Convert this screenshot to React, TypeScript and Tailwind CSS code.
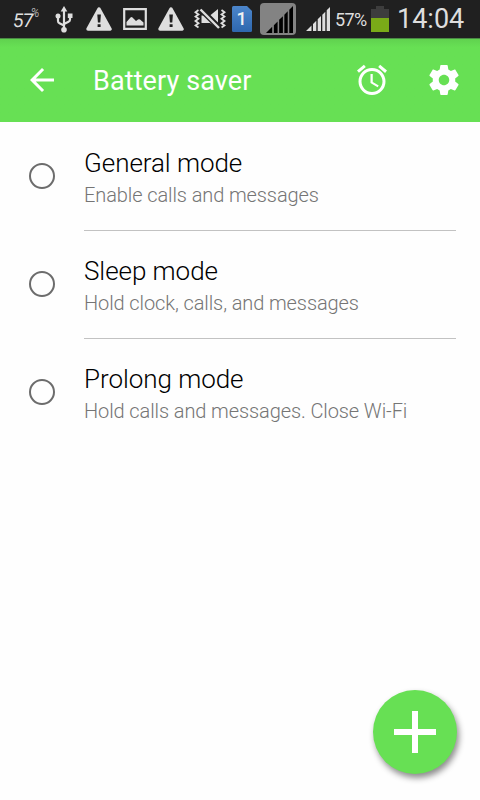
import { useState } from 'react';
import { MdAlarm, MdArrowBack } from 'react-icons/md';

interface Mode {
  id: string;
  title: string;
  description: string;
}

const modes: Mode[] = [
  { id: 'general', title: 'General mode', description: 'Enable calls and messages' },
  { id: 'sleep', title: 'Sleep mode', description: 'Hold clock, calls, and messages' },
  { id: 'prolong', title: 'Prolong mode', description: 'Hold calls and messages. Close Wi-Fi' },
];

function WarningIcon() {
  return (
    <svg className="w-[26px] h-[24px] shrink-0" viewBox="0 0 26 24" fill="#dedede">
      <path d="M13 2 24 22H2Z" stroke="#dedede" strokeWidth="3.500" strokeLinejoin="round" />
      <path d="M11.300 7.500h3.600l-.6 8h-2.400zM11.600 17.200h3v2.800h-3z" fill="#202020" />
    </svg>
  );
}

function UsbIcon() {
  return (
    <svg className="w-[18px] h-[27px] shrink-0" viewBox="0 0 18 27" fill="none" stroke="#dedede" strokeWidth="2.200">
      <path d="M9 4v19M3 11v4q0 1.500 1.500 2.200L9 19.500M15 9.500v4q0 1.500-1.500 2.200L9 18" />
      <path d="M9 0 12.300 5.500H5.700Z" fill="#dedede" stroke="none" />
      <circle cx="9" cy="23.700" r="2.800" fill="#dedede" stroke="none" />
      <circle cx="3" cy="10" r="2.500" fill="#dedede" stroke="none" />
      <path d="M12.800 7.500h4.700v4.500h-4.700z" fill="#dedede" stroke="none" />
    </svg>
  );
}

function PictureIcon() {
  return (
    <svg className="w-[24px] h-[22px] shrink-0" viewBox="0 0 24 22">
      <path d="M1.200 1.200h21.600v19.600H1.200z" fill="none" stroke="#dedede" strokeWidth="2.200" />
      <path d="M3.500 17.500V14l4-4.500q1-.8 2 0l3.500 3.500 2-1.500q1-.5 2 0l3.500 3v3z" fill="#dedede" />
    </svg>
  );
}

function MuteIcon() {
  return (
    <svg className="w-[32px] h-[22px] shrink-0" viewBox="0 0 32 22" fill="none" stroke="#dedede">
      <path
        d="M4.500 2 1.500 4.200l3 2.200-3 2.200 3 2.200-3 2.200 3 2.200-3 2.200 3 2.200M27.500 2l3 2.200-3 2.200 3 2.200-3 2.200 3 2.200-3 2.200 3 2.200-3 2.200"
        strokeWidth="1.800"
      />
      <path d="M7.500 7.500H16l8-6.500v19l-8-5H7.500z" fill="#dedede" stroke="none" />
      <path d="M6.500 1 25.500 20" stroke="#202020" strokeWidth="5.600" />
      <path d="M6.500 1.500 25 20" strokeWidth="2.400" />
    </svg>
  );
}

function SimIcon() {
  return (
    <svg className="w-[20px] h-[26px] shrink-0" viewBox="0 0 20 26">
      <defs>
        <linearGradient id="sim" x1="0" y1="0" x2="0" y2="1">
          <stop offset="0" stopColor="#4c86cb" />
          <stop offset="1" stopColor="#2e67ae" />
        </linearGradient>
      </defs>
      <path d="M1.500 0H15l5 5v19.500q0 1.500-1.500 1.500h-17Q0 26 0 24.500v-23Q0 0 1.500 0z" fill="url(#sim)" />
      <text x="9.600" y="19" fill="#f2f2f2" fontSize="18" fontWeight="500" fontFamily="Roboto, sans-serif" textAnchor="middle">
        1
      </text>
    </svg>
  );
}

function SignalBars({ className }: { className: string }) {
  return (
    <svg className={className} viewBox="0 0 24 24" fill="currentColor">
      <path d="M0 24l5.500-5.500V24zM7 24v-7l3.300-3.300V24zM11.700 24V12.300L15 9v15zM16.300 24V7.700L19.300 4.700V24zM20.700 24V3.300L24 0v24z" />
    </svg>
  );
}

function StatusBar() {
  return (
    <div className="flex items-center h-[39px] pl-[13px] bg-[#202020] border-b border-[#4b8a45] text-[#dedede] whitespace-nowrap">
      <div className="flex items-start w-[42px] h-[25px] shrink-0">
        <span className="mt-[2px] text-[19px] leading-[24px] tracking-[-0.8px] -skew-x-6">57</span>
        <span className="text-[12px] leading-[12px] italic font-light -ml-[2px]">%</span>
      </div>
      <UsbIcon />
      <div className="w-[13px] shrink-0" />
      <WarningIcon />
      <div className="w-[11px] shrink-0" />
      <PictureIcon />
      <div className="w-[11px] shrink-0" />
      <WarningIcon />
      <div className="w-[10px] shrink-0" />
      <MuteIcon />
      <div className="w-[6px] shrink-0" />
      <SimIcon />
      <div className="flex items-end justify-end w-[36px] h-[32px] shrink-0 ml-[8px] pr-[3px] pb-[2px] rounded-[4px] bg-[#838383]">
        <SignalBars className="size-[27px] text-black" />
      </div>
      <SignalBars className="size-6 shrink-0 ml-[10px]" />
      <span className="w-[36px] shrink-0 ml-[5px] text-[18px] tracking-[-0.6px]">57%</span>
      <svg className="w-[18px] h-[26px] shrink-0" viewBox="0 0 18 26">
        <path d="M5 0h8v3h5v9H0V3h5z" fill="#3d3d3d" />
        <path d="M0 12h18v14H0z" fill="#7aaa18" />
      </svg>
      <span className="ml-[8px] text-[27px] leading-none">14:04</span>
    </div>
  );
}

function SettingsIcon() {
  return (
    <svg className="size-9" viewBox="0 0 24 24" fill="currentColor">
      <path d="M19.430 12.980c.04-.32.07-.64.07-.98s-.03-.66-.07-.98l2.110-1.650c.19-.15.24-.42.12-.64l-2-3.460c-.12-.22-.39-.3-.61-.22l-2.490 1c-.52-.4-1.080-.73-1.690-.98l-.38-2.650C14.460 2.180 14.250 2 14 2h-4c-.25 0-.46.18-.49.42l-.38 2.650c-.61.25-1.170.59-1.690.98l-2.490-1c-.23-.09-.49 0-.61.22l-2 3.460c-.13.22-.07.49.12.64l2.110 1.650c-.04.32-.07.65-.07.98s.03.66.07.98l-2.110 1.650c-.19.15-.24.42-.12.64l2 3.460c.12.22.39.3.61.22l2.490-1c.52.4 1.080.73 1.690.98l.38 2.650c.03.24.24.42.49.42h4c.25 0 .46-.18.49-.42l.38-2.650c.61-.25 1.170-.59 1.690-.98l2.490 1c.23.09.49 0 .61-.22l2-3.460c.12-.22.07-.49-.12-.64l-2.110-1.650zM12 15.500c-1.930 0-3.500-1.570-3.500-3.500s1.570-3.500 3.500-3.500 3.500 1.570 3.500 3.500-1.570 3.500-3.500 3.500z" />
    </svg>
  );
}

function AppBar() {
  return (
    <header className="flex items-center h-[83px] pl-6 pr-[18px] pb-px bg-linear-to-b from-[#60d24f] to-[#67e054] to-10% text-white">
      <button aria-label="Back">
        <MdArrowBack className="size-9" />
      </button>
      <h1 className="ml-[33px] pt-[3px] text-[27px] leading-none tracking-[0.1px]">Battery saver</h1>
      <div className="flex items-center gap-9 ml-auto">
        <button aria-label="Schedule">
          <MdAlarm className="size-9" />
        </button>
        <button aria-label="Settings">
          <SettingsIcon />
        </button>
      </div>
    </header>
  );
}

interface ModeRowProps {
  mode: Mode;
  selected: boolean;
  last: boolean;
  onSelect: (id: string) => void;
}

function ModeRow({ mode, selected, last, onSelect }: ModeRowProps) {
  return (
    <button
      role="radio"
      aria-checked={selected}
      onClick={() => onSelect(mode.id)}
      className="flex items-center w-full h-[108px] pl-[29px] pr-6 text-left"
    >
      <span className="flex items-center justify-center size-[26px] shrink-0 mb-[2px] rounded-full border-2 border-[#6c6c6c]">
        {selected && <span className="size-3 rounded-full bg-[#67e054]" />}
      </span>
      <span
        className={`flex flex-col flex-1 h-full ml-[29px] pt-[24px] whitespace-nowrap ${last ? '' : 'border-b border-[#c2c2c2]'}`}
      >
        <span className="text-[26px] leading-[32px] tracking-[-0.05px] font-light text-black">{mode.title}</span>
        <span className="mt-[4px] text-[20px] leading-[24px] tracking-[-0.1px] font-light text-[#757575]">
          {mode.description}
        </span>
      </span>
    </button>
  );
}

export default function App() {
  const [selected, setSelected] = useState<string | null>(null);

  return (
    <div className="flex flex-col w-[480px] h-[800px] overflow-hidden bg-[#fefefe] font-[Roboto,sans-serif]">
      <StatusBar />
      <AppBar />
      <main role="radiogroup" className="flex-1 pt-px">
        {modes.map((mode, i) => (
          <ModeRow
            key={mode.id}
            mode={mode}
            selected={selected === mode.id}
            last={i === modes.length - 1}
            onSelect={setSelected}
          />
        ))}
      </main>
      <div className="flex justify-end pr-[23px] pb-[26px]">
        <button
          aria-label="Add mode"
          className="flex items-center justify-center size-[84px] rounded-full bg-[#67e054] shadow-[2px_4px_6px_rgba(0,0,0,0.45)]"
        >
          <svg className="size-[42px]" viewBox="0 0 42 42" fill="white">
            <path d="M18 0h6v18h18v6H24v18h-6V24H0v-6h18z" />
          </svg>
        </button>
      </div>
    </div>
  );
}
